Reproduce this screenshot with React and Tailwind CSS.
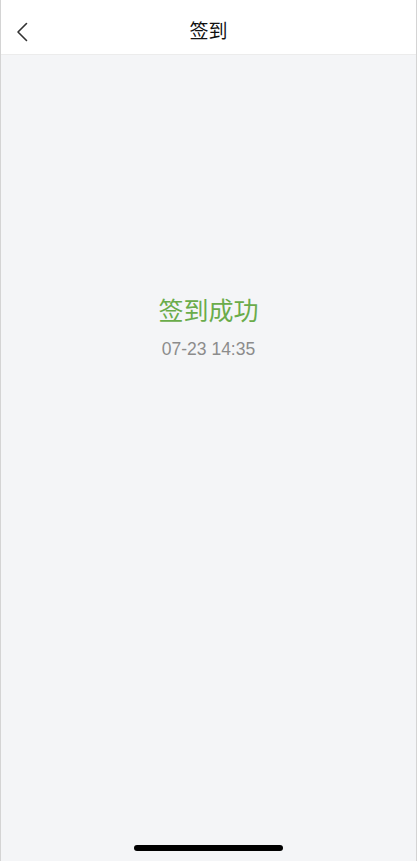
import React from 'react';

const SignIn = () => {
    return (
        <div
            className="h-[861px] w-[417px] flex flex-col bg-[#f4f5f7] border-x border-[#d4d4d4] overflow-hidden"
            style={{ fontFamily: '"Liberation Sans", "Noto Sans CJK SC", sans-serif' }}
        >
            <header className="h-[55px] shrink-0 flex items-center justify-center relative bg-white border-b border-[#ececec]">
                <button className="absolute left-[10px] top-[19px] w-[22px] h-[26px] flex items-center justify-center">
                    <svg width="12" height="20" viewBox="0 0 12 20" fill="none">
                        <path d="M10.5 1.5L2 10l8.5 8.5" stroke="#333" strokeWidth="1.6" strokeLinecap="round" strokeLinejoin="round" />
                    </svg>
                </button>
                <h1 className="text-[19px] text-[#111] leading-none pt-[8px]">签到</h1>
            </header>

            <main className="flex-1 flex flex-col items-center pt-[244px]">
                <p className="text-[25px] leading-none text-[#6aac4a]">签到成功</p>
                <p className="mt-[17px] text-[17.5px] leading-none text-[#8c8c8c]">07-23 14:35</p>
            </main>

            <div className="h-[16px] shrink-0 flex justify-center">
                <div className="w-[149px] h-[6px] rounded-full bg-black" />
            </div>
        </div>
    );
};

export default function App() {
    return <SignIn />;
}
